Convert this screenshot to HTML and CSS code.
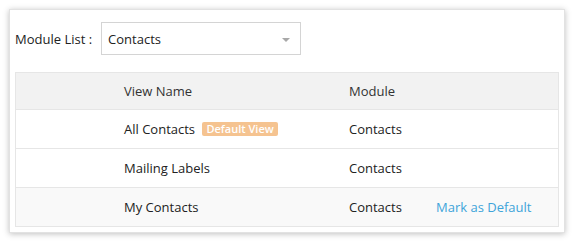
FILE: index.html
```html
<!DOCTYPE html>
<html lang="en">
<head>
  <meta charset="UTF-8">
  <title>Module List</title>
  <link rel="stylesheet" href="styles.css">
</head>
<body>
  <div class="card">
    <div class="toolbar">
      <label class="label">Module List :</label>
      <div class="select">
        <span>Contacts</span>
        <span class="arrow"></span>
      </div>
    </div>

    <table class="views">
      <thead>
        <tr>
          <th class="col-gap"></th>
          <th class="col-name">View Name</th>
          <th class="col-module">Module</th>
          <th></th>
        </tr>
      </thead>
      <tbody>
        <tr>
          <td></td>
          <td>All Contacts <span class="badge">Default View</span></td>
          <td>Contacts</td>
          <td></td>
        </tr>
        <tr>
          <td></td>
          <td>Mailing Labels</td>
          <td>Contacts</td>
          <td></td>
        </tr>
        <tr class="hover">
          <td></td>
          <td>My Contacts</td>
          <td>Contacts</td>
          <td><a class="link" href="#">Mark as Default</a></td>
        </tr>
      </tbody>
    </table>
  </div>
</body>
</html>
```

FILE: styles.css
```css
body {
  margin: 0;
  font-family: "Open Sans", "Liberation Sans", sans-serif;
  font-size: 13px;
  color: #222;
  background: #fff;
}
.card {
  margin: 9px;
  width: 556px;
  height: 224px;
  box-sizing: border-box;
  padding: 12px 6px 0 5px;
  background: #fff;
  border: 1px solid #e2e2e2;
  box-shadow: 0 1px 6px rgba(0,0,0,0.25);
}
.toolbar {
  display: flex;
  align-items: center;
  gap: 9px;
  margin-bottom: 17px;
}
.select {
  width: 200px;
  height: 33px;
  box-sizing: border-box;
  border: 1px solid #d4d4d4;
  display: flex;
  align-items: center;
  justify-content: space-between;
  padding: 0 10px 0 6px;
}
.arrow {
  width: 0;
  height: 0;
  border-left: 4px solid transparent;
  border-right: 4px solid transparent;
  border-top: 4px solid #a8a8a8;
  margin-top: 2px;
}
.views {
  width: 544px;
  border-collapse: collapse;
  border: 1px solid #e6e6e6;
}
.views th,
.views td {
  height: 38px;
  padding: 0;
  text-align: left;
  font-weight: normal;
  border-bottom: 1px solid #e6e6e6;
}
.views th {
  background: #f2f2f2;
  height: 36px;
  color: #333;
}
.col-gap { width: 108px; }
.col-name { width: 225px; }
.col-module { width: 87px; }
.hover td { background: #f9f9f9; }
.badge {
  display: inline-block;
  background: #f5c390;
  color: #fff;
  font-size: 11px;
  font-weight: 600;
  line-height: 14px;
  padding: 0 4px;
  border-radius: 2px;
  margin-left: 4px;
  vertical-align: 1px;
}
.link {
  color: #3ea4d9;
  text-decoration: none;
}
```
